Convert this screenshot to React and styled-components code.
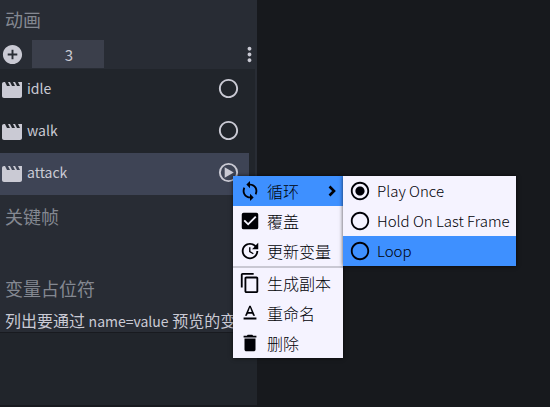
import React from "react";
import styled, { createGlobalStyle, css } from "styled-components";
import {
  MdAddCircle,
  MdMoreVert,
  MdMovie,
  MdRadioButtonUnchecked,
  MdRadioButtonChecked,
  MdSync,
  MdCheckBox,
  MdUpdate,
  MdContentCopy,
  MdTextFormat,
  MdDelete,
} from "react-icons/md";

const GlobalStyle = createGlobalStyle`
  * { box-sizing: border-box; }
  body {
    margin: 0;
    background: #17191d;
    color: #cacad4;
    font: 16px/24px "Noto Sans CJK SC", "Noto Sans", sans-serif;
    overflow: hidden;
  }
  button, input, textarea {
    font: inherit;
    color: inherit;
    margin: 0;
    padding: 0;
    border: 0;
    background: none;
  }
  svg { display: block; flex: none; }
`;

const Workspace = styled.main`
  position: relative;
  display: flex;
  min-height: 100vh;
`;

const Sidebar = styled.aside`
  display: flex;
  flex-direction: column;
  width: 257px;
  background: #282c34;
`;

const Panel = styled.section`
  display: flex;
  flex-direction: column;
  flex: ${(p) => (p.$grow ? "1" : "none")};
  padding-bottom: ${(p) => p.$space || 0}px;
`;

const PanelTitle = styled.h2`
  margin: 0;
  padding: ${(p) => p.$top || 5}px 5px 6px;
  font-size: 18px;
  line-height: 28px;
  font-weight: 400;
  color: #848891;
`;

const Toolbar = styled.div`
  display: flex;
  align-items: center;
  justify-content: space-between;
  height: 30px;
`;

const ToolGroup = styled.div`
  display: flex;
  align-items: center;
  gap: 8px;
`;

const IconButton = styled.button`
  display: grid;
  place-content: center;
  width: ${(p) => p.$width || 24}px;
  height: 28px;
`;

const NumberField = styled.input`
  width: 72px;
  height: 28px;
  padding-left: 2px;
  background: #3b3f4b;
  font-size: 15px;
  text-align: center;
`;

const AnimationList = styled.ul`
  margin: 0 2px 0 0;
  padding: 0 6px 0 0;
  list-style: none;
  background: #21252b;
`;

const AnimationRow = styled.li`
  display: flex;
  align-items: center;
  gap: 3px;
  height: 42px;
  padding-right: 9px;
  background: ${(p) => (p.$selected ? "#3e4455" : "transparent")};
`;

const AnimationInfo = styled.div`
  display: flex;
  flex: 1;
  align-items: center;
  justify-content: space-between;
  padding-bottom: 4px;
  font-size: 14px;
`;

const Description = styled.label`
  height: 24px;
  padding: 0 5px;
  white-space: nowrap;
`;

const Expression = styled.span`
  font-size: 14px;
`;

const Placeholders = styled.textarea`
  flex: 1;
  resize: none;
  background: #21252b;
  border-top: 1px solid #181a1f;
  border-bottom: 2px solid #181a1f;
`;

const Menu = styled.div`
  position: absolute;
  top: 176px;
  left: ${(p) => p.$left}px;
  min-width: 110px;
  background: #f5f3ff;
  color: #000006;
  font-size: ${(p) => p.$textSize || 16}px;
  font-weight: 300;
  box-shadow: 0 0 4px rgba(0, 0, 0, 0.7);
`;

const menuRow = css`
  display: flex;
  align-items: center;
  gap: 6px;
  width: 100%;
  height: 30px;
  padding: 0 6px;
  white-space: nowrap;
  text-align: left;
  background: ${(p) => (p.$active ? "#3e90ff" : "transparent")};
`;

const MenuButton = styled.button`
  ${menuRow}
`;

const MenuChoice = styled.label`
  ${menuRow}
`;

const MenuText = styled.span`
  flex: 1;
`;

const ChoiceMark = styled.span`
  display: grid;
  > * { grid-area: 1 / 1; }
  input { opacity: 0; width: 22px; height: 22px; }
`;

const Separator = styled.hr`
  height: 2px;
  margin: 0;
  border: 0;
  background: #c9c8d3;
`;

const animations = ["idle", "walk", "attack"];
const loopModes = ["Play Once", "Hold On Last Frame", "Loop"];

function Chevron() {
  return (
    <svg width="9" height="12" viewBox="0 0 9 12" fill="none" stroke="currentColor" strokeWidth="2.6">
      <path d="M1.500 1.500 6 6l-4.500 4.500" />
    </svg>
  );
}

function PlayCircle() {
  return (
    <svg width="23" height="23" viewBox="0 0 24 24" fill="none" stroke="currentColor" strokeWidth="2">
      <circle cx="12" cy="12" r="9" />
      <path d="M8 6.500v11l9.500-5.500z" fill="currentColor" stroke="none" />
    </svg>
  );
}

export default function App() {
  return (
    <>
      <GlobalStyle />
      <Workspace>
        <Sidebar>
          <Panel>
            <PanelTitle>动画</PanelTitle>
            <Toolbar>
              <ToolGroup>
                <IconButton aria-label="添加动画"><MdAddCircle size={23} /></IconButton>
                <NumberField aria-label="数值" defaultValue="3" />
              </ToolGroup>
              <IconButton $width={16} aria-label="更多"><MdMoreVert size={23} /></IconButton>
            </Toolbar>
            <AnimationList>
              {animations.map((name) => (
                <AnimationRow key={name} $selected={name === "attack"}>
                  <MdMovie size={24} />
                  <AnimationInfo>
                    <span>{name}</span>
                    <IconButton aria-label={`播放 ${name}`}>
                      {name === "attack" ? <PlayCircle /> : <MdRadioButtonUnchecked size={23} />}
                    </IconButton>
                  </AnimationInfo>
                </AnimationRow>
              ))}
            </AnimationList>
          </Panel>
          <Panel $space={33}>
            <PanelTitle $top={7}>关键帧</PanelTitle>
          </Panel>
          <Panel $grow>
            <PanelTitle>变量占位符</PanelTitle>
            <Description htmlFor="placeholders">
              列出要通过 <Expression>name=value</Expression> 预览的变
            </Description>
            <Placeholders id="placeholders" />
          </Panel>
        </Sidebar>

        <Menu $left={233}>
          <MenuButton $active aria-haspopup="true" aria-expanded="true">
            <MdSync size={22} />
            <MenuText>循环</MenuText>
            <Chevron />
          </MenuButton>
          <MenuChoice>
            <ChoiceMark>
              <input type="checkbox" defaultChecked />
              <MdCheckBox size={22} />
            </ChoiceMark>
            <MenuText>覆盖</MenuText>
          </MenuChoice>
          <MenuButton><MdUpdate size={22} /><MenuText>更新变量</MenuText></MenuButton>
          <Separator />
          <MenuButton><MdContentCopy size={22} /><MenuText>生成副本</MenuText></MenuButton>
          <MenuButton><MdTextFormat size={22} /><MenuText>重命名</MenuText></MenuButton>
          <MenuButton><MdDelete size={22} /><MenuText>删除</MenuText></MenuButton>
        </Menu>

        <Menu $left={343} $textSize={15}>
          {loopModes.map((mode) => (
            <MenuChoice key={mode} $active={mode === "Loop"}>
              <ChoiceMark>
                <input type="radio" name="loop" defaultChecked={mode === "Play Once"} />
                {mode === "Play Once" ? <MdRadioButtonChecked size={22} /> : <MdRadioButtonUnchecked size={22} />}
              </ChoiceMark>
              <MenuText>{mode}</MenuText>
            </MenuChoice>
          ))}
        </Menu>
      </Workspace>
    </>
  );
}
